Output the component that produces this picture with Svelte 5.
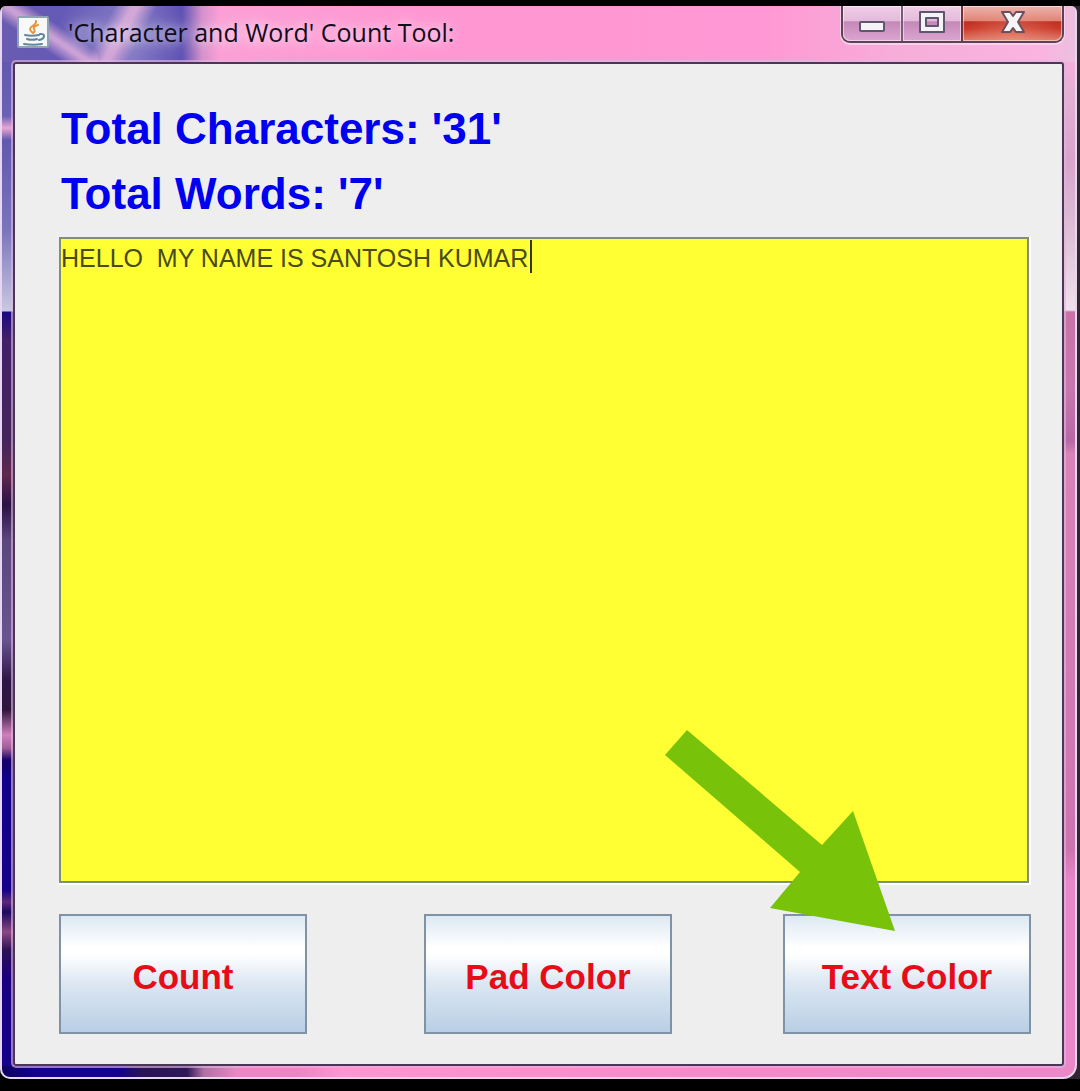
<script>
  import { onMount } from 'svelte';

  const padColors = ['#ffff33', '#ccffcc', '#ffd9b3', '#ffffff'];
  const textColors = ['#4a4a1c', '#0000cc', '#990000', '#006600'];

  let text = $state('HELLO  MY NAME IS SANTOSH KUMAR');
  let characters = $state(31);
  let words = $state(7);
  let padIndex = $state(0);
  let textIndex = $state(0);
  let caretX = $state(0);
  let caretLine = $state(0);
  let pad;

  function count() {
    characters = text.length;
    words = text.split(' ').length;
  }

  function placeCaret() {
    const context = document.createElement('canvas').getContext('2d');
    const style = getComputedStyle(pad);
    context.font = `${style.fontSize} ${style.fontFamily}`;
    const lines = text.slice(0, pad.selectionEnd || text.length).split('\n');
    caretLine = lines.length - 1;
    caretX = Math.round(context.measureText(lines[caretLine]).width);
  }

  onMount(placeCaret);
</script>

<div class="window">
  <header class="titlebar">
    <div class="caption">
      <svg class="java" viewBox="0 0 32 32" aria-hidden="true">
        <rect x="1" y="1" width="30" height="30" rx="1" fill="#f7f8f8" stroke="#8fa3b5" stroke-width="2" />
        <path d="M19 5c1 4-6 5-6 8 0 2 2 3 3 4M21 9c-4 1-5 3-4 4 1 2 1 3-1 4" fill="none" stroke="#e5953c" stroke-width="2" stroke-linecap="round" />
        <path d="M8 19c4 1 9 1 14 0M10 23c3 1 7 1 10 0M7 28c6 1 12 1 18 0M23 18c6-1 5 5-1 6" fill="none" stroke="#64869c" stroke-width="2" stroke-linecap="round" />
      </svg>
      <h1>'Character and Word' Count Tool:</h1>
    </div>
    <div class="controls">
      <button class="min" aria-label="Minimize">
        <svg width="28" height="14" viewBox="0 0 28 14"><rect x="2" y="2" width="24" height="9" rx="1" fill="#f4f4f6" stroke="#5f5670" stroke-width="2" /></svg>
      </button>
      <button class="max" aria-label="Maximize">
        <svg width="28" height="24" viewBox="0 0 28 24"><path d="M2 2h24v20H2z M8 8h12v8H8z" fill="#f4f4f6" fill-rule="evenodd" stroke="#5f5670" stroke-width="2" stroke-linejoin="round" /></svg>
      </button>
      <button class="close" aria-label="Close">
        <svg width="26" height="24" viewBox="0 0 26 24"><path d="M2 2h8l3 4 3-4h8l-6 10 6 10h-8l-3-4-3 4H2l6-10z" fill="#f6f4f5" stroke="#6b4f5e" stroke-width="2" stroke-linejoin="round" /></svg>
      </button>
    </div>
  </header>

  <main>
    <p class="total">Total Characters: '{characters}'</p>
    <p class="total">Total Words: '{words}'</p>

    <div class="pad">
      <textarea
        aria-label="Text"
        spellcheck="false"
        bind:this={pad}
        bind:value={text}
        oninput={placeCaret}
        onkeyup={placeCaret}
        onclick={placeCaret}
        style:background-color={padColors[padIndex]}
        style:color={textColors[textIndex]}
      ></textarea>
      <span class="caret" style:left="{caretX + 1}px" style:top="{caretLine * 32 + 1}px"></span>
    </div>

    <div class="actions">
      <button class="action count" onclick={count}>Count</button>
      <button class="action pad-color" onclick={() => (padIndex = (padIndex + 1) % padColors.length)}>Pad Color</button>
      <div class="pointed">
        <button class="action" onclick={() => (textIndex = (textIndex + 1) % textColors.length)}>Text Color</button>
        <svg class="arrow" width="240" height="210" viewBox="0 0 240 210" aria-hidden="true">
          <path d="M27 5 162 120 193 86 235 206 110 183 140 147 5 30z" fill="#78c20a" />
        </svg>
      </div>
    </div>
  </main>
</div>

<style>
  :global(body) {
    margin: 0;
    background: #000;
  }

  :global(#app) {
    display: flex;
    min-height: 100vh;
    background: linear-gradient(90deg, #000 50%, #30262f) 0 6px / 100% calc(100% - 18px) no-repeat;
  }

  .window {
    flex: 1;
    box-sizing: border-box;
    display: flex;
    flex-direction: column;
    margin: 6px 3px 12px 0;
    padding: 0 11px 11px;
    border: 2px solid #e6d6f0;
    border-top: 0;
    border-radius: 6px 6px 14px 10px;
    font-family: "Liberation Sans", Arial, sans-serif;
    background:
      linear-gradient(90deg, #0c0060, #14008c 35px, #14008c 115px, #2a1458 140px, #2e1858 185px, #b070a4 202px, #ea88c4 235px, #ea86c4 295px, #fa96d0 340px, #f28cc8 720px, #ea88c8) left bottom / 100% 11px no-repeat,
      linear-gradient(#6258b0 56px, #6a60b5 110px, #eba6d4 122px, #6258b0 134px, #7a74bc 224px, #cbc8e2 305px, #1a0a80 306px, #42206a 334px, #45245c 434px, #60284e 469px, #2a1146 499px, #5c467e 534px, #685490 634px, #2e1648 674px, #30163c 704px, #d080bc 729px, #a05c98 742px, #150068 754px, #12008c 774px, #150088 884px, #5c2878 896px, #1c0860 906px, #8c4884 926px, #2c1054 944px, #1a0080 974px, #14008c) left top / 11px 100% no-repeat,
      linear-gradient(#f4b0dc 56px, #e4b0d2 87px, #d8a4cc 153px, #dcbcd4 218px, #f0e0ea 304px, #c873a8 306px, #c878ae 383px, #b868a4 435px, #d884b8 448px, #cc74b0 843px, #e888c8 876px, #ea88c8) right top / 11px 100% no-repeat,
      #f6a4d6;
  }

  .titlebar {
    display: flex;
    justify-content: space-between;
    align-items: flex-start;
    height: 56px;
    margin: 0 -11px;
    padding: 0 11px 0 15px;
    box-sizing: border-box;
    border-radius: 5px 5px 0 0;
    background:
      linear-gradient(214deg, transparent 38%, #e2b2dccc 50%, #e2b2dccc 53%, transparent 66%) 0 0 / 96px 100% no-repeat,
      linear-gradient(118deg, transparent 34%, #e6b2dccc 48%, #e6b2dccc 53%, transparent 68%) 70px 0 / 96px 100% no-repeat,
      linear-gradient(90deg, #6a5cb0, #6459b6 60px, #857bc6 130px, #5f52b4 180px, #d590cc 200px, #fb9fd6 218px, #ff97d3 420px, #ff98d4 760px, #f6aed9 900px, #fab4df 1040px, #ecc0de);
  }

  .caption {
    display: flex;
    align-items: center;
    gap: 19px;
    padding-top: 10px;
  }

  .java {
    width: 32px;
    height: 32px;
    flex: none;
  }

  h1 {
    margin: 0;
    font: 400 25px/30px "Open Sans", "Noto Sans", sans-serif;
    color: #120c1c;
    white-space: nowrap;
    text-shadow: 0 0 8px #ffffff73, 0 0 14px #ffffff80, 0 0 20px #ffffff80;
  }

  .controls {
    display: flex;
    height: 37px;
    flex: none;
    box-sizing: border-box;
    border: 2px solid #5d4257;
    border-top: 0;
    border-radius: 0 0 9px 9px;
    box-shadow: 0 1px 0 1px #fad0ea;
  }

  .controls button {
    display: flex;
    align-items: center;
    justify-content: center;
    box-sizing: border-box;
    margin: 0;
    padding: 0 0 4px;
    border: 0;
    box-shadow: inset 0 0 0 1px #ffffff80;
    background: linear-gradient(#f0cde6, #e3bbdb 42%, #c588b8 45%, #dba5d0);
  }

  .controls .min {
    width: 60px;
    padding: 6px 0 0;
    border-right: 2px solid #7c5a78;
    border-radius: 0 0 0 7px;
  }

  .controls .max {
    width: 58px;
  }

  .controls .close {
    width: 101px;
    border-left: 2px solid #70333a;
    border-radius: 0 0 7px 0;
    background:
      radial-gradient(ellipse at 50% 100%, #f0a08880, transparent 70%),
      linear-gradient(#eeb4ac, #e08478 42%, #c03022 45%, #cc3a2a 65%, #e08070);
  }

  main {
    flex: 1;
    display: flex;
    flex-direction: column;
    padding: 32px 31px 30px 44px;
    border: 2px solid #4c3656;
    border-radius: 3px;
    box-shadow: 0 0 0 2px #e0b6e0a6;
    background: #eee;
  }

  .total {
    margin: 0;
    font-size: 44px;
    font-weight: 700;
    line-height: 65px;
    padding-left: 2px;
    color: #0000f0;
  }

  .pad {
    position: relative;
    flex: 1;
    display: flex;
    min-height: 200px;
    margin: 11px 2px 31px 0;
    border: 2px solid #7f8f78;
    box-shadow: 1px 1px 0 1px #fff;
  }

  textarea {
    flex: 1;
    min-width: 0;
    margin: 0;
    padding: 3px 0;
    border: 0;
    outline: 0;
    resize: none;
    font: 25px/32px "Liberation Sans", Arial, sans-serif;
    caret-color: transparent;
  }

  .caret {
    position: absolute;
    width: 2px;
    height: 33px;
    background: #333;
    pointer-events: none;
  }

  .actions {
    display: grid;
    grid-template-columns: 248fr 117fr 248fr 111fr 248fr;
  }

  .count {
    grid-column: 1;
  }

  .pad-color {
    grid-column: 3;
  }

  .pointed {
    grid-column: 5;
    position: relative;
    display: grid;
  }

  .action {
    height: 120px;
    margin: 0;
    padding: 6px 0 0;
    border: 2px solid #8093a6;
    font: 700 35px/40px "Liberation Sans", Arial, sans-serif;
    color: #e60d18;
    white-space: nowrap;
    background: linear-gradient(#dde8f3, #fff 27%, #fff 33%, #dce7f2 58%, #b8cfe5);
  }

  .arrow {
    position: absolute;
    left: -123px;
    top: -189px;
    pointer-events: none;
  }
</style>
